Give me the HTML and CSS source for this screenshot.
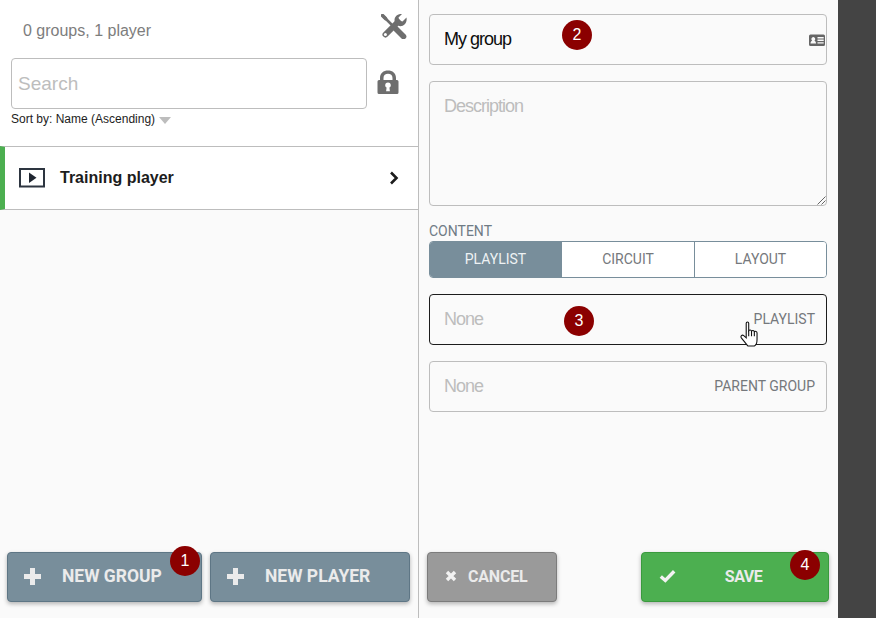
FILE: index.html
```html
<!DOCTYPE html>
<html lang="en">
<head>
<meta charset="utf-8">
<title>New group</title>
<link rel="stylesheet" href="styles.css">
</head>
<body>
<div class="app">
  <section class="left">
    <header class="left-head">
      <div class="count-row">
        <span class="count">0 groups, 1 player</span>
        <svg class="tools" viewBox="0 0 26 25" width="26" height="25"><g fill="none" stroke="#6e6e6e" stroke-linecap="round"><path d="M3 3 L14 14" stroke-width="2.6"/><path d="M15 15 L22.5 22.5" stroke-width="5.6"/><path d="M1.5 1.5 L4.5 4.5" stroke-width="3.6"/><path d="M4.5 20.5 L17 8" stroke-width="6"/></g><path d="M25.5 3.5 L21.5 7.5 L18.5 6.5 L17.5 3.5 L21 0 C16 -0.5 12.5 3.5 13.8 8 L18 12 C22.5 13 26.5 9 25.5 3.5 Z" fill="#6e6e6e"/><circle cx="4.4" cy="20.6" r="1.5" fill="#fff"/></svg>
      </div>
      <div class="search-row">
        <div class="search">Search</div>
        <svg class="lock" viewBox="0 0 22 24" width="22" height="24"><path d="M3 11 V8 C3 3 6.5 0.5 11 0.5 C15.5 0.5 19 3 19 8 V11 H15.5 V8 C15.5 5 13.5 3.8 11 3.8 C8.5 3.8 6.5 5 6.5 8 V11 Z" fill="#6e6e6e"/><path fill-rule="evenodd" d="M2 10 H20 Q21.5 10 21.5 11.5 V22.5 Q21.5 24 20 24 H2 Q0.5 24 0.5 22.5 V11.5 Q0.5 10 2 10 Z M11 12.6 C9.1 12.6 8.2 14 8.2 15.3 C8.2 16.4 8.8 17.1 9.6 17.6 L9.1 21.2 H12.9 L12.4 17.6 C13.2 17.1 13.8 16.4 13.8 15.3 C13.8 14 12.9 12.6 11 12.6 Z" fill="#6e6e6e"/></svg>
      </div>
      <div class="sort">Sort by: Name (Ascending)<span class="caret"></span></div>
    </header>
    <div class="player">
      <svg class="screen" viewBox="0 0 26 20" width="26" height="20"><rect x="1" y="1" width="24" height="17.5" fill="none" stroke="#2d3540" stroke-width="2"/><path d="M10 4.5 L17.5 9.8 L10 15 Z" fill="#1f2530"/></svg>
      <span class="player-name">Training player</span>
      <svg class="chev" viewBox="0 0 10 14" width="10" height="14"><path d="M2 1.5 L7.5 7 L2 12.5" fill="none" stroke="#1c1c1c" stroke-width="2.6"/></svg>
    </div>
    <div class="spacer"></div>
    <footer class="left-foot">
      <button class="btn btn-blue btn-group"><span class="plus"></span><span class="btn-text">NEW GROUP</span></button>
      <button class="btn btn-blue btn-player"><span class="plus"></span><span class="btn-text">NEW PLAYER</span></button>
      <span class="badge badge-1">1</span>
    </footer>
  </section>
  <section class="right">
    <div class="field field-name">
      <span class="value">My group</span>
      <svg class="idcard" viewBox="0 0 16 12" width="16" height="12"><path fill-rule="evenodd" d="M1.5 0.5 H14.5 Q16 0.5 16 2 V10.5 Q16 12 14.5 12 H1.5 Q0 12 0 10.5 V2 Q0 0.5 1.5 0.5 Z M1.5 9.5 H7 C7 7.5 6 7 5.4 6.8 C6 6.4 6.2 5.8 6.2 5.2 C6.2 4 5.4 3 4.3 3 C3.2 3 2.4 4 2.4 5.2 C2.4 5.8 2.6 6.4 3.2 6.8 C2.5 7 1.5 7.5 1.5 9.5 Z M8.5 3 V4.4 H14.7 V3 Z M8.5 5.6 V7 H14.7 V5.6 Z M8.5 8.2 V9.6 H14.7 V8.2 Z" fill="#666"/></svg>
      <span class="badge badge-2">2</span>
    </div>
    <div class="field field-desc">
      <span class="ph">Description</span>
      <svg class="grip" viewBox="0 0 9 9" width="9" height="9"><path d="M0.5 8.5 L8.5 0.5 M4.5 8.5 L8.5 4.5" stroke="#666" stroke-width="1" fill="none"/></svg>
    </div>
    <div class="label">CONTENT</div>
    <div class="tabs">
      <div class="tab tab-on">PLAYLIST</div>
      <div class="tab">CIRCUIT</div>
      <div class="tab">LAYOUT</div>
    </div>
    <div class="field field-select field-active">
      <span class="ph">None</span>
      <span class="tag">PLAYLIST</span>
      <span class="badge badge-3">3</span>
      <svg class="hand" viewBox="0 0 18 24" width="20" height="26"><path d="M5.5 2 C5.5 0.5 7.8 0.5 7.8 2 V9 C8.5 8 10 8.2 10.4 9.3 C11.2 8.4 12.6 8.7 13 9.8 C13.8 9.2 15.5 9.6 15.5 11 V17 C15.5 20 14 22.5 13 23 H7 C5.5 21.5 3.5 18.5 1 15.5 C0 14 1.7 12.3 3.2 13.5 L5.5 15.5 Z" fill="#fff" stroke="#111" stroke-width="1"/><path d="M7.8 9 V14 M10.4 9.3 V14 M13 9.8 V14" stroke="#111" stroke-width="1" fill="none"/></svg>
    </div>
    <div class="field field-select">
      <span class="ph">None</span>
      <span class="tag">PARENT GROUP</span>
    </div>
    <div class="spacer"></div>
    <footer class="right-foot">
      <button class="btn btn-grey btn-cancel"><svg class="x" viewBox="0 0 12 12" width="12" height="12"><path d="M2 2 L10 10 M10 2 L2 10" stroke="#f2f2f2" stroke-width="3.4" fill="none"/></svg><span class="btn-text">CANCEL</span></button>
      <button class="btn btn-green btn-save"><svg class="check" viewBox="0 0 17 14" width="17" height="14"><path d="M1.8 7.5 L6.3 11.5 L15.2 2.2" stroke="#f2f2f2" stroke-width="3.4" fill="none"/></svg><span class="btn-text">SAVE</span></button>
      <span class="badge badge-4">4</span>
    </footer>
  </section>
  <aside class="dark"></aside>
</div>
</body>
</html>
```
FILE: styles.css
```css
* { box-sizing: border-box; }
html, body { margin: 0; padding: 0; }
body { width: 876px; height: 618px; overflow: hidden; font-family: "Liberation Sans", Arial, sans-serif; background: #444; }
.app { display: grid; grid-template-columns: 419px 419px 38px; height: 618px; }
.left { display: flex; flex-direction: column; background: #fafafa; border-right: 1px solid #bdbdbd; height: 618px; }
.left-head { background: #fff; height: 146px; padding: 11px 18px 0 11px; }
.count-row { display: flex; justify-content: space-between; align-items: flex-start; height: 47px; padding-left: 12px; }
.count { font-size: 16px; line-height: 18px; color: #7d7d7d; margin-top: 11px; }
.tools { margin-top: 3px; margin-right: -7px; }
.search-row { display: flex; align-items: center; justify-content: space-between; }
.search { width: 356px; height: 51px; border: 1px solid #bdbdbd; border-radius: 4px; background: #fff; color: #bdbdbd; font-size: 19px; line-height: 50px; padding-left: 6px; }
.lock { margin-right: 1px; margin-top: -4px; }
.sort { font-size: 12px; line-height: 14px; color: #1c1c1c; margin-top: 3px; display: flex; align-items: center; }
.caret { width: 0; height: 0; margin-left: 4px; margin-top: 2px; border-left: 6.5px solid transparent; border-right: 6.5px solid transparent; border-top: 7px solid #bdbdbd; }
.player { display: flex; align-items: center; height: 64px; background: #fff; border-top: 1px solid #bdbdbd; border-bottom: 1px solid #bdbdbd; border-left: 5px solid #4caf50; padding-left: 14px; padding-right: 19px; }
.screen { flex: none; }
.player-name { font-size: 16px; font-weight: 700; color: #1c1c1c; margin-left: 15px; flex: 1; }
.spacer { flex: 1; }
.left-foot { position: relative; display: flex; gap: 8px; padding: 0 0 16px 7px; }
.btn { display: flex; align-items: center; height: 50px; border-radius: 4px; border: 1px solid; padding: 0 0 2px; color: #ebebeb; font-family: Roboto, "Liberation Sans", sans-serif; font-size: 16px; font-weight: 700; box-shadow: 0 2px 4px rgba(0,0,0,.28); }
.btn-blue { background: #788e9b; border-color: #5e7685; font-size: 17.5px; }
.btn-grey { background: #9a9a9a; border-color: #7c7c7c; }
.btn-green { background: #4caf50; border-color: #3a9a3e; }
.btn-group { width: 195px; }
.btn-player { width: 200px; }
.plus { position: relative; width: 17px; height: 17px; margin-left: 16px; flex: none; }
.plus::before, .plus::after { content: ""; position: absolute; background: #ebebeb; }
.plus::before { left: 6px; top: 0; width: 5px; height: 17px; }
.plus::after { left: 0; top: 6px; width: 17px; height: 5px; }
.btn-blue .btn-text { margin-left: 21px; }
.right { display: flex; flex-direction: column; background: #fafafa; padding: 14px 11px 16px 10px; height: 618px; }
.field { position: relative; flex: none; border: 1px solid #bdbdbd; border-radius: 4px; padding: 0 14px; font-size: 18px; letter-spacing: -1px; }
.field-name { display: flex; align-items: center; height: 51px; color: #0d0d0d; }
.value { line-height: 49px; }
.idcard { position: absolute; right: 1px; top: 19px; }
.field-desc { height: 125px; margin-top: 16px; padding-top: 14px; line-height: 20px; }
.ph { color: #bdbdbd; }
.grip { position: absolute; right: 0; bottom: 0; }
.label { font-family: Roboto, "Liberation Sans", sans-serif; font-size: 14px; line-height: 16px; color: #6f7b85; margin-top: 17px; }
.tabs { flex: none; display: grid; grid-template-columns: 131px 133px 132px; height: 37px; margin-top: 2px; border: 1px solid #788e9b; border-radius: 4px; overflow: hidden; }
.tab { display: flex; align-items: center; justify-content: center; padding-bottom: 1px; font-family: Roboto, "Liberation Sans", sans-serif; font-size: 14px; color: #75787c; background: #fff; border-left: 1px solid #788e9b; }
.tab-on { color: #eef2f4; background: #788e9b; border-left: 0; }
.field-select { display: flex; align-items: center; justify-content: space-between; height: 51px; margin-top: 16px; }
.field-active { border-color: #1c1c1c; }
.tag { font-family: Roboto, "Liberation Sans", sans-serif; font-size: 14px; letter-spacing: 0; color: #75787c; margin-right: -3px; padding-bottom: 1px; }
.right-foot { position: relative; display: flex; justify-content: space-between; margin-left: -2px; margin-right: -2px; }
.btn-cancel { width: 130px; }
.btn-save { width: 188px; position: relative; justify-content: center; }
.x { margin-left: 17px; flex: none; }
.btn-cancel .btn-text { margin-left: 11px; letter-spacing: -.2px; }
.check { position: absolute; left: 17px; top: 16px; }
.btn-save .btn-text { letter-spacing: -.5px; margin-left: 17px; }
.badge { position: absolute; width: 30px; height: 30px; border-radius: 50%; background: #8b0000; color: #fff; font-size: 16px; letter-spacing: 0; line-height: 30px; text-align: center; font-family: "Liberation Sans", sans-serif; font-weight: 400; z-index: 2; }
.badge-1 { left: 170px; top: -6px; }
.badge-2 { left: 132px; top: 5px; }
.badge-3 { left: 134px; top: 11px; }
.badge-4 { right: 9px; top: -2px; }
.hand { position: absolute; left: 310px; top: 26px; z-index: 2; }
.dark { background: #444; }
```
